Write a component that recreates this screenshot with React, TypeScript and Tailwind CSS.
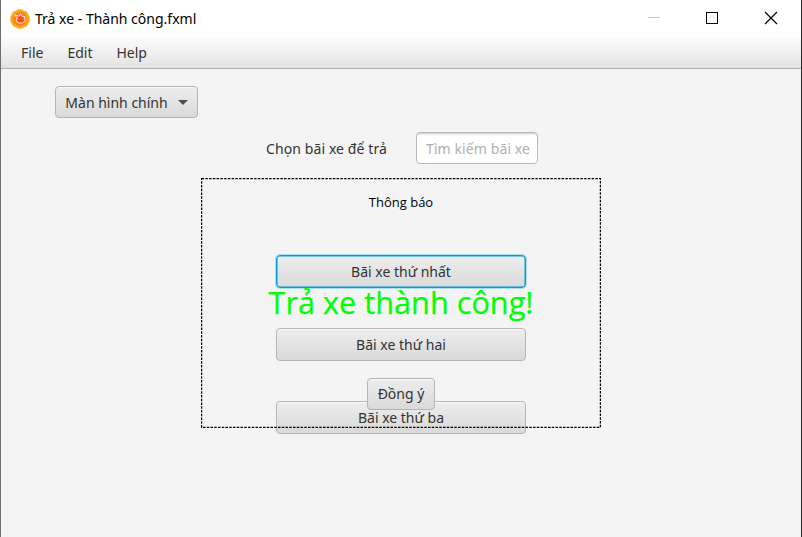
import type { ReactNode } from "react";

const Logo = () => (
  <svg className="block h-5 w-5" viewBox="0 0 20 20">
    <path
      d="M10 0.3 C12 -0.2 13 1.6 14.6 2 C16.4 2 17.8 3.2 17.9 5 C19.8 7 20 8.4 19.5 10 C20 12 19.6 13.4 17.9 15 C17.7 17 16.4 18 14.6 18 C13 18.8 12 20.1 10 19.7 C8 20.1 7 18.8 5.4 18 C3.6 18 2.3 17 2.1 15 C.4 13.4 0 12 .5 10 C0 8.4 .2 7 2.1 5 C2.2 3.2 3.6 2 5.4 2 C7 1.6 8 -0.2 10 .3Z"
      fill="#fba81c"
    />
    <circle cx="10" cy="10" r="7" fill="#f58220" />
    <path
      d="M4.8 6 L8.8 7.2 L10.8 4.8 L11.5 7 L15.2 8 L14 9.8 L15.6 11.6 L12.4 14 L8.4 14 L6.2 11.6 L7.4 9.4 Z"
      fill="#f4511e"
      stroke="#fff"
      strokeWidth="0.9"
      strokeLinejoin="round"
    />
  </svg>
);

const Dashes = () => (
  <svg className="pointer-events-none absolute inset-0 h-full w-full" viewBox="0 0 400 250">
    <rect x="0.6" y="0.6" width="398.8" height="248.8" fill="none" stroke="#000" strokeWidth="1.25" strokeDasharray="2.5 1.25" />
  </svg>
);

const Button = ({ children, focused = false, className = "" }: { children: ReactNode; focused?: boolean; className?: string }) => (
  <button
    className={`flex items-center justify-center rounded-[4px] border bg-linear-to-b from-[#eeeeee] to-[#d9d9d9] text-[14px] leading-5 text-[#333] ${
      focused
        ? "border-[#039ed3] shadow-[0_0_0_1px_#a9def0,inset_0_0_0_0.5px_#039ed3]"
        : "border-[#b5b5b5] shadow-[inset_0_1px_0_#f8f8f8]"
    } ${className}`}
  >
    {children}
  </button>
);

export default function App() {
  return (
    <div className="flex h-[537px] w-[802px] flex-col overflow-hidden border-r border-l border-r-[#2b2b2b] border-l-[#707070] bg-[#f4f4f4] font-['Noto_Sans',sans-serif] text-[14px] text-[#333]">
      <header className="flex h-[37px] shrink-0 items-center bg-white pl-[9px] text-black">
        <Logo />
        <h1 className="ml-[5px] grow text-[14px] leading-5 whitespace-nowrap">Trả xe - Thành công.fxml</h1>
        <svg className="block h-[37px] w-[154px]" viewBox="647 0 154 37" shapeRendering="crispEdges">
          <path d="M648 17.5h12" stroke="#c8c8c8" />
          <rect x="706.5" y="12.5" width="11" height="11" fill="none" stroke="#000" />
          <path d="M765 12l12 12M777 12l-12 12" stroke="#000" strokeWidth="1.2" shapeRendering="auto" />
        </svg>
      </header>
      <nav className="flex h-8 shrink-0 items-center gap-6 border-b border-[#b3b3b3] bg-linear-to-b from-[#fdfdfd] to-[#e2e2e2] pl-5">
        <span>File</span>
        <span>Edit</span>
        <span>Help</span>
      </nav>
      <main className="relative flex grow flex-col pt-[17px]">
        <Button className="ml-[54px] h-8 w-[143px]">
          <span className="pt-0.5 whitespace-nowrap">Màn hình chính</span>
          <svg className="mt-px ml-2.5 h-[5px] w-2.5" viewBox="0 0 10 5">
            <path d="M0 0h10L5 5z" fill="#4f4f4f" />
          </svg>
        </Button>
        <div className="mt-[14px] ml-[265px] flex h-8 items-center">
          <label className="w-[150px] tracking-[0.1px] whitespace-nowrap">Chọn bãi xe để trả</label>
          <input
            className="h-8 w-[122px] rounded-[4px] border border-[#b9b9b9] bg-white pr-1 pl-[9px] text-[14px] tracking-[0.1px] shadow-[inset_0_2px_2px_-1px_#cccccc] placeholder:text-[#b0b0b0]"
            placeholder="Tìm kiếm bãi xe"
          />
        </div>
        <div className="mt-[91px] ml-[275px] flex w-[250px] flex-col gap-10">
          <Button focused className="h-[33px]">Bãi xe thứ nhất</Button>
          <Button className="h-[33px]">Bãi xe thứ hai</Button>
          <Button className="h-[33px]">Bãi xe thứ ba</Button>
        </div>
        <section className="absolute top-[109px] left-[200px] flex h-[250px] w-[400px] flex-col items-center">
          <Dashes />
          <p className="mt-[14px] font-['Open_Sans',sans-serif] text-[13px] leading-5 text-black">Thông báo</p>
          <p className="mt-[68px] font-['Open_Sans',sans-serif] text-[30.7px] leading-[44px] whitespace-nowrap text-[#00ff00] [-webkit-text-stroke:0.25px_#00ff00]">
            Trả xe thành công!
          </p>
          <Button className="mt-[54px] h-8 w-[68px]">Đồng ý</Button>
        </section>
      </main>
    </div>
  );
}
